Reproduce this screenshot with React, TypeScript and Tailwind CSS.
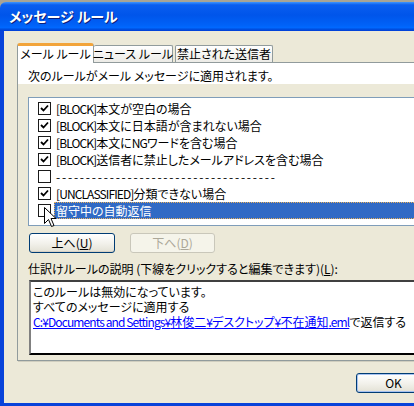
import React from "react";

const font = "font-['MS_UI_Gothic','Noto_Sans_CJK_JP',sans-serif] [font-feature-settings:'palt']";

// MS UI Gothic has narrow latin glyphs; squeeze latin runs a bit
function T({ s }: { s: string }) {
  const parts = s.split(/([\x20-\x7E¥]+)/);
  return (
    <>
      {parts.map((p, i) =>
        /^[\x20-\x7E¥]+$/.test(p) ? (
          <span key={i} className="tracking-[-0.9px]">
            {p}
          </span>
        ) : (
          <React.Fragment key={i}>{p}</React.Fragment>
        )
      )}
    </>
  );
}

const rules = [
  { label: "[BLOCK]本文が空白の場合", checked: true },
  { label: "[BLOCK]本文に日本語が含まれない場合", checked: true },
  { label: "[BLOCK]本文にNGワードを含む場合", checked: true },
  { label: "[BLOCK]送信者に禁止したメールアドレスを含む場合", checked: true },
  { label: "-------------------------------------", checked: false, dashes: true },
  { label: "[UNCLASSIFIED]分類できない場合", checked: true },
  { label: "留守中の自動返信", checked: false, selected: true },
];

function CheckBox({ checked }: { checked: boolean }) {
  return (
    <div className="w-[13px] h-[13px] shrink-0 bg-white border border-[#1a1a1a] flex items-center justify-center">
      {checked && (
        <svg width="9" height="9" viewBox="0 0 9 9">
          <path d="M1 4 L3.5 6.5 L8 1.5" fill="none" stroke="#000" strokeWidth="1.8" />
        </svg>
      )}
    </div>
  );
}

function XpButton({ children, disabled, className = "" }: { children: React.ReactNode; disabled?: boolean; className?: string }) {
  return (
    <div
      className={`h-[20px] rounded-[3px] border flex items-center justify-center text-[12px] ${
        disabled
          ? "border-[#C9C7BA] bg-[#F5F4EA] text-[#ACA899]"
          : "border-[#003C74] bg-gradient-to-b from-white via-[#F3F2EC] to-[#E3E1D5] text-black shadow-[inset_0_-1px_0_#D6D0C5]"
      } ${className}`}
    >
      {children}
    </div>
  );
}

export default function App() {
  return (
    <div className={`w-[414px] h-[406px] overflow-hidden bg-[#A8A496] relative ${font}`}>
      <div className="w-[440px] mt-[2px] flex flex-col rounded-tl-[6px] overflow-hidden">
        {/* title bar */}
        <div className="h-[29px] flex items-center pl-[9px] bg-[linear-gradient(to_bottom,#3D95FF_0%,#0A5EF0_10%,#0055EA_45%,#0062F8_80%,#0068FF_88%,#0050E0_94%,#003DD7_100%)]">
          <span className="text-white font-bold text-[14px] [text-shadow:1px_1px_0_#0A1E7A]">
            メッセージ ルール
          </span>
        </div>
        {/* body */}
        <div className="h-[375px] bg-[#ECE9D8] border-l-[4px] border-b-[3px] border-[#0843DA] pl-[13px] pt-[12px] flex flex-col">
          {/* tabs */}
          <div className="flex items-end h-[19px] text-[12px] relative z-10 whitespace-nowrap">
            <div className="w-[77px] h-[20px] -mb-[1px] bg-white border-x border-[#919B9C] border-t-[3px] border-t-[#F2A43A] rounded-t-[3px] flex items-center justify-center pb-[1px]">
              メール ルール
            </div>
            <div className="w-[79px] h-[17px] bg-gradient-to-b from-white to-[#ECEBE6] border-r border-t border-[#919B9C] rounded-t-[2px] flex items-center justify-center">
              ニュース ルール
            </div>
            <div className="w-[98px] h-[17px] ml-[2px] bg-gradient-to-b from-white to-[#ECEBE6] border-x border-t border-[#919B9C] rounded-t-[2px] flex items-center justify-center">
              禁止された送信者
            </div>
          </div>
          {/* panel */}
          <div className="h-[299px] border border-[#919B9C] shadow-[1px_1px_0_#D0CEBF] bg-[#ECE9D8] pl-[10px] flex flex-col text-[12px]">
            <div className="h-[21px] pt-[4px] bg-white -ml-[10px] pl-[10px] whitespace-nowrap">
              次のルールがメール メッセージに適用されます。
            </div>
            {/* list */}
            <div className="mt-[13px] h-[129px] bg-white border border-[#7F9DB9] pt-[2px] relative">
              {rules.map((r) => (
                <div key={r.label} className="h-[17px] flex items-center pl-[9px]">
                  <CheckBox checked={r.checked} />
                  <div
                    className={`ml-[3px] h-[17px] flex items-center pl-[2px] whitespace-nowrap ${
                      r.selected ? "flex-1 bg-[#316AC5] text-white outline-1 outline-dotted outline-[#E8B05A] -outline-offset-1" : ""
                    }`}
                  >
                    {r.dashes ? <span className="tracking-[1.8px]">{r.label}</span> : <T s={r.label} />}
                  </div>
                </div>
              ))}
              {/* mouse cursor */}
              <svg className="absolute left-[15px] top-[109px]" width="13" height="21" viewBox="0 0 13 21">
                <path d="M0.5 0.5 L0.5 16.5 L4.5 12.5 L7.5 19.5 L10 18.5 L7 11.5 L12 11.5 Z" fill="white" stroke="black" strokeWidth="1" strokeLinejoin="round" />
              </svg>
            </div>
            {/* buttons */}
            <div className="flex gap-[15px] mt-[7px] ml-[1px]">
              <XpButton className="w-[86px]">
                上へ(<span className="underline">U</span>)
              </XpButton>
              <XpButton className="w-[85px]" disabled>
                下へ(<span className="underline">D</span>)
              </XpButton>
            </div>
            <div className="mt-[5px] h-[22px] flex items-center whitespace-nowrap">
              仕訳けルールの説明 (下線をクリックすると編集できます)(<span className="underline">L</span>):
            </div>
            <div className="h-[75px] border-t-2 border-l-2 border-t-[#404040] border-l-[#808080] border-b-2 border-b-black bg-white pl-[2px] pt-[2px] leading-[15px] ml-[1px]">
              <div>このルールは無効になっています。</div>
              <div>すべてのメッセージに適用する</div>
              <div className="whitespace-nowrap">
                <span className="text-[#0000FF] underline">
                  <T s="C:¥Documents and Settings¥林俊二¥デスクトップ¥不在通知.eml" />
                </span>
                で返信する
              </div>
            </div>
          </div>
          {/* bottom buttons */}
          <div className="flex mt-[12px] pl-[339px]">
            <XpButton className="w-[75px] h-[19px] shadow-[inset_0_0_0_1px_#A7C2F0]">OK</XpButton>
          </div>
        </div>
      </div>
    </div>
  );
}
